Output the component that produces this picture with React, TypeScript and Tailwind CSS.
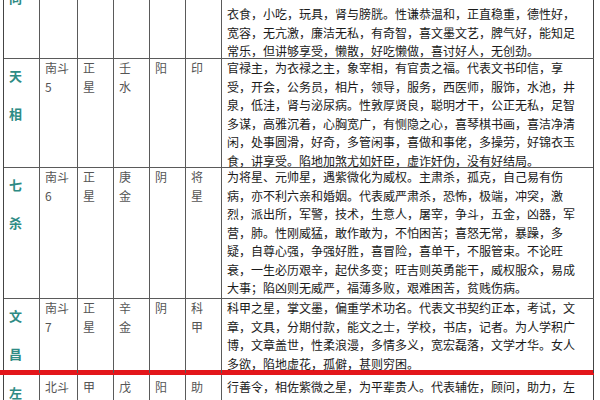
const FONT = { fontFamily: '"Noto Sans CJK SC", "Liberation Sans", sans-serif' }

type Row = {
  name: string[]
  group: string[]
  kind: string[]
  element: string[]
  yin: string
  hua: string[]
  desc: string[]
  h: string
}

const rows: Row[] = [
  {
    name: ['天', '相'],
    group: ['南斗', '5'],
    kind: ['正', '星'],
    element: ['壬', '水'],
    yin: '阳',
    hua: ['印'],
    h: 'h-[109px]',
    desc: [
      '官禄主，为衣禄之主，象宰相，有官贵之福。代表文书印信，享',
      '受，开会，公务员，相片，领导，服务，西医师，服饰，水池，井',
      '泉，低洼，肾与泌尿病。性敦厚贤良，聪明才干，公正无私，足智',
      '多谋，高雅沉着，心胸宽广，有恻隐之心，喜琴棋书画，喜洁净清',
      '闲，处事圆滑，好奇，多管闲事，喜做和事佬，多操劳，好锦衣玉',
      '食，讲享受。陷地加煞尤如奸臣，虚诈奸伪，没有好结局。',
    ],
  },
  {
    name: ['七', '杀'],
    group: ['南斗', '6'],
    kind: ['正', '星'],
    element: ['庚', '金'],
    yin: '阴',
    hua: ['将', '星'],
    h: 'h-[131px]',
    desc: [
      '为将星、元帅星，遇紫微化为威权。主肃杀，孤克，自己易有伤',
      '病，亦不利六亲和婚姻。代表威严肃杀，恐怖，极端，冲突，激',
      '烈，派出所，军警，技术，生意人，屠宰，争斗，五金，凶器，军',
      '营，肺。性刚威猛，敢作敢为，不怕困苦；喜怒无常，暴躁，多',
      '疑，自尊心强，争强好胜，喜冒险，喜单干，不服管束。不论旺',
      '衰，一生必历艰辛，起伏多变；旺吉则英勇能干，威权服众，易成',
      '大事；陷凶则无威严，福薄多败，艰难困苦，贫贱伤病。',
    ],
  },
  {
    name: ['文', '昌'],
    group: ['南斗', '7'],
    kind: ['正', '星'],
    element: ['辛', '金'],
    yin: '阴',
    hua: ['科', '甲'],
    h: 'h-[71px]',
    desc: [
      '科甲之星，掌文墨，偏重学术功名。代表文书契约正本，考试，文',
      '章，文具，分期付款，能文之士，学校，书店，记者。为人学积广',
      '博，文章盖世，性柔浪漫，多情多义，宽宏磊落，文学才华。女人',
      '多欲，陷地虚花，孤僻，甚则穷困。',
    ],
  },
]

const GRID = 'grid grid-cols-[36px_38px_36px_36px_36px_36px_372px]'
const CELL = 'border-r border-[#5a5a5a] pl-[5px] text-[12px] leading-[18.5px] text-[#555]'
const DESC = 'border-r border-[#444] pl-[5px] text-[12px] leading-[18.5px] text-[#1a1a1a]'
const NAME = 'border-r border-[#5a5a5a] pl-[5px] text-[13px] leading-[18px] font-bold text-[#2e8b84]'

function Lines({ items }: { items: string[] }) {
  return (
    <>
      {items.map((t, i) => (
        <div key={i}>{t}</div>
      ))}
    </>
  )
}

export default function App() {
  return (
    <div className="h-[400px] w-[600px] overflow-hidden bg-white" style={FONT}>
      <div className="ml-[3px] w-[591px] border-l border-[#444]">
        {/* top row, mostly scrolled out of view */}
        <div className={`${GRID} h-[59px] overflow-hidden border-b border-[#5a5a5a]`}>
          <div className={NAME}>
            <div className="-mt-[11px]">同</div>
          </div>
          <div className={CELL} />
          <div className={CELL} />
          <div className={CELL} />
          <div className={CELL} />
          <div className={CELL} />
          <div className={`${DESC} pt-[5px]`}>
            <Lines
              items={[
                '衣食，小吃，玩具，肾与膀胱。性谦恭温和，正直稳重，德性好，',
                '宽容，无亢激，廉洁无私，有奇智，喜文墨文艺，脾气好，能知足',
                '常乐，但讲够享受，懒散，好吃懒做，喜讨好人，无创劲。',
              ]}
            />
          </div>
        </div>

        {rows.map((r, i) => (
          <div
            key={r.name.join('')}
            className={`${GRID} ${r.h} ${i < rows.length - 1 ? 'border-b border-[#5a5a5a]' : ''}`}
          >
            <div className={`${NAME} pt-[8px]`}>
              <div>{r.name[0]}</div>
              <div className="mt-[20px]">{r.name[1]}</div>
            </div>
            <div className={CELL}>
              <Lines items={r.group} />
            </div>
            <div className={CELL}>
              <Lines items={r.kind} />
            </div>
            <div className={CELL}>
              <Lines items={r.element} />
            </div>
            <div className={CELL}>{r.yin}</div>
            <div className={CELL}>
              <Lines items={r.hua} />
            </div>
            <div className={DESC}>
              <Lines items={r.desc} />
            </div>
          </div>
        ))}
      </div>

      <div className="h-[5px] w-[594px] bg-[#e3161b]" />

      <div className="ml-[3px] w-[591px] border-l border-[#444]">
        <div className={`${GRID} h-[40px]`}>
          <div className={`${NAME} pt-[9px]`}>
            <div>左</div>
          </div>
          <div className={`${CELL} pt-[3px]`}>
            <Lines items={['北斗', '辅']} />
          </div>
          <div className={`${CELL} pt-[3px]`}>
            <Lines items={['甲', '级']} />
          </div>
          <div className={`${CELL} pt-[3px]`}>
            <Lines items={['戊', '土']} />
          </div>
          <div className={`${CELL} pt-[3px]`}>阳</div>
          <div className={`${CELL} pt-[3px]`}>
            <Lines items={['助', '力']} />
          </div>
          <div className={`${DESC} pt-[3px]`}>
            <Lines
              items={[
                '行善令，相佐紫微之星，为平辈贵人。代表辅佐，顾问，助力，左',
                '右手，秘书，同事，朋友，平辈，兄弟，合作，贵人，助手，帮忙',
              ]}
            />
          </div>
        </div>
      </div>
    </div>
  )
}
